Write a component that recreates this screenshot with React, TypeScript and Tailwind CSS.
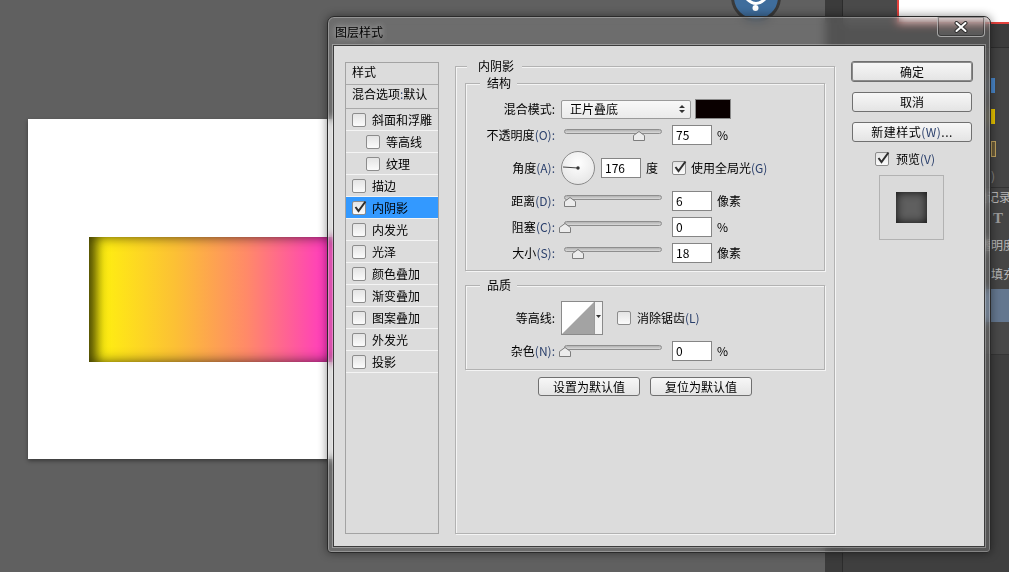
import React from "react";
import clsx from "clsx";

type StyleItem = { label: string; checked?: boolean; indent?: boolean; active?: boolean };

const styleItems: StyleItem[] = [
  { label: "斜面和浮雕" },
  { label: "等高线", indent: true },
  { label: "纹理", indent: true },
  { label: "描边" },
  { label: "内阴影", checked: true, active: true },
  { label: "内发光" },
  { label: "光泽" },
  { label: "颜色叠加" },
  { label: "渐变叠加" },
  { label: "图案叠加" },
  { label: "外发光" },
  { label: "投影" },
];

function Check({ checked = false }: { checked?: boolean }) {
  return (
    <span className="relative flex h-[14px] w-[14px] shrink-0 rounded-[2px] border border-[#8c8c8c] bg-gradient-to-b from-[#e4e4e4] to-[#fbfbfb]">
      {checked && (
        <svg width="15" height="15" viewBox="0 0 15 15" className="absolute -top-[3px] left-[0px]">
          <path d="M2.5 8 L5.5 12 L12.5 2.5" fill="none" stroke="#2e2e2e" strokeWidth="2" />
        </svg>
      )}
    </span>
  );
}

// hotkey part of a label, e.g. (O)
function Key({ c }: { c: string }) {
  return <span className="text-[#2a3f6b]">({c}):</span>;
}

function Slider({ pos }: { pos: number }) {
  // pos = centre of the thumb, px from the slider's left edge
  return (
    <div className="relative ml-[6px] h-[20px] w-[104px] shrink-0">
      <div className="absolute left-[3px] right-[3px] top-[4px] h-[5px] rounded-full border border-[#8e8e8e] bg-gradient-to-b from-[#b2b2b2] to-[#dadada]" />
      <svg className="absolute top-[6px]" style={{ left: pos - 6 }} width="12" height="10" viewBox="0 0 12 10">
        <path d="M0.5 9.5 V4.5 L6 0.5 L11.5 4.5 V9.5 Z" fill="#ececec" stroke="#7d7d7d" />
      </svg>
    </div>
  );
}

function Field({ value }: { value: string }) {
  return (
    <div className="h-[20px] w-[40px] shrink-0 border border-[#858585] bg-white pl-[3px] leading-[18px]">{value}</div>
  );
}

function Label({ children }: { children: React.ReactNode }) {
  return <span className="w-[89px] shrink-0 whitespace-nowrap text-right">{children}</span>;
}

function SliderRow({ label, k, pos, value, unit }: { label: string; k: string; pos: number; value: string; unit: string }) {
  return (
    <div className="flex h-[20px] items-center">
      <Label>
        {label}
        <Key c={k} />
      </Label>
      <Slider pos={pos} />
      <div className="ml-[7px]">
        <Field value={value} />
      </div>
      <span className="ml-[5px]">{unit}</span>
    </div>
  );
}

function Btn({ children, className }: { children: React.ReactNode; className?: string }) {
  return (
    <div
      className={clsx(
        "flex items-center justify-center rounded-[3px] border border-[#707070] bg-gradient-to-b from-[#f7f7f7] to-[#e4e4e4]",
        className
      )}
    >
      {children}
    </div>
  );
}

function Group({ title, children, className }: { title: string; children: React.ReactNode; className?: string }) {
  return (
    <fieldset
      className={clsx(
        "border border-[#b2b2b2] shadow-[inset_1px_1px_0_#f4f4f4,1px_1px_0_#f4f4f4]",
        className
      )}
    >
      <legend className="ml-[14px] bg-[#dcdcdc] pl-[7px] pr-[6px] leading-[16px]">{title}</legend>
      {children}
    </fieldset>
  );
}

function StyleList() {
  return (
    <div className="mt-[16px] flex h-[472px] w-[94px] shrink-0 flex-col border border-[#a3a3a3]">
      <div className="h-[22px] shrink-0 border-b border-[#a9a9a9] pl-[6px] pt-[1px]">样式</div>
      <div className="h-[24px] shrink-0 border-b border-[#a9a9a9] pl-[6px] pt-[1px] whitespace-nowrap">
        混合选项<span className="text-[#2a3f6b]">:</span>默认
      </div>
      {styleItems.map((it) => (
        <div
          key={it.label}
          className={clsx(
            "flex h-[22px] shrink-0 items-center gap-[6px] border-b border-[#f4f4f4]",
            it.indent ? "pl-[20px]" : "pl-[6px]",
            it.active && "bg-[#3399ff]"
          )}
        >
          <Check checked={it.checked} />
          <span>{it.label}</span>
        </div>
      ))}
    </div>
  );
}

function InnerShadowPanel() {
  return (
    <fieldset className="mt-[12px] h-[476px] w-[380px] shrink-0 border border-[#b2b2b2] shadow-[inset_1px_1px_0_#f4f4f4,1px_1px_0_#f4f4f4]">
      <legend className="ml-[11px] bg-[#dcdcdc] pl-[11px] pr-[8px] leading-[16px]">内阴影</legend>

      <Group title="结构" className="mx-[9px] mt-[1px] pb-[7px] pt-[8px]">
        <div className="flex flex-col gap-[6px]">
          <div className="flex h-[20px] items-center">
            <Label>混合模式:</Label>
            <div className="ml-[6px] flex h-[19px] w-[130px] items-center justify-between rounded-[2px] border border-[#9a9a9a] bg-gradient-to-b from-[#f8f8f8] to-[#ebebeb] pl-[8px] pr-[5px]">
              <span>正片叠底</span>
              <svg width="6" height="10" viewBox="0 0 6 10">
                <path d="M0 4 L3 1 L6 4Z M0 6 L3 9 L6 6Z" fill="#333" />
              </svg>
            </div>
            <div className="ml-[4px] h-[20px] w-[36px] border border-[#8a8a8a] bg-[#0a0000]" />
          </div>

          <SliderRow label="不透明度" k="O" pos={77.5} value="75" unit="%" />

          <div className="flex h-[34px] items-center">
            <Label>
              角度
              <Key c="A" />
            </Label>
            <div className="relative ml-[6px] h-[34px] w-[34px] shrink-0 rounded-full border border-[#8a8a8a] bg-[radial-gradient(circle_at_50%_35%,#ffffff,#e0e0e0)]">
              <svg className="absolute inset-0" width="32" height="32" viewBox="0 0 32 32">
                <line x1="16" y1="16" x2="1" y2="15" stroke="#444" strokeWidth="1" />
                <circle cx="16" cy="16" r="1.7" fill="#333" />
              </svg>
            </div>
            <div className="ml-[6px]">
              <Field value="176" />
            </div>
            <span className="ml-[5px]">度</span>
            <span className="ml-[14px]">
              <Check checked />
            </span>
            <span className="ml-[5px] whitespace-nowrap">
              使用全局光<span className="text-[#2a3f6b]">(G)</span>
            </span>
          </div>

          <SliderRow label="距离" k="D" pos={9} value="6" unit="像素" />
          <SliderRow label="阻塞" k="C" pos={3.5} value="0" unit="%" />
          <SliderRow label="大小" k="S" pos={16.5} value="18" unit="像素" />
        </div>
      </Group>

      <Group title="品质" className="mx-[9px] mt-[6px] pb-[8px] pt-[8px]">
        <div className="flex flex-col gap-[6px]">
          <div className="flex h-[34px] items-center">
            <Label>等高线:</Label>
            <div className="ml-[6px] flex h-[34px] w-[42px] shrink-0 border border-[#8a8a8a] bg-white">
              <svg width="32" height="32" viewBox="0 0 32 32" className="shrink-0">
                <path d="M0 32 L32 0 L32 32 Z" fill="#a3a3a3" />
              </svg>
              <div className="flex flex-1 justify-center border-l border-[#9a9a9a] bg-[#f3f3f3] pt-[13px]">
                <svg width="5" height="3" viewBox="0 0 5 3">
                  <path d="M0 0 H5 L2.5 3 Z" fill="#333" />
                </svg>
              </div>
            </div>
            <span className="ml-[14px]">
              <Check />
            </span>
            <span className="ml-[6px] whitespace-nowrap">
              消除锯齿<span className="text-[#2a3f6b]">(L)</span>
            </span>
          </div>
          <SliderRow label="杂色" k="N" pos={3.5} value="0" unit="%" />
        </div>
      </Group>

      <div className="mt-[7px] flex justify-center gap-[10px]">
        <Btn className="h-[19px] w-[102px]">设置为默认值</Btn>
        <Btn className="h-[19px] w-[102px]">复位为默认值</Btn>
      </div>
    </fieldset>
  );
}

function ActionColumn() {
  return (
    <div className="mt-[15px] flex w-[122px] shrink-0 flex-col items-start">
      <Btn className="h-[21px] w-[122px] border-[#5e5e5e] shadow-[inset_0_0_0_1px_#8a8a8a]">确定</Btn>
      <Btn className="ml-[1px] mt-[10px] h-[20px] w-[120px]">取消</Btn>
      <Btn className="ml-[1px] mt-[10px] h-[20px] w-[120px] tracking-[0.5px]">
        新建样式<span className="text-[#2a3f6b]">(W)</span>...
      </Btn>
      <div className="ml-[24px] mt-[10px] flex h-[14px] items-center gap-[7px]">
        <Check checked />
        <span>
          预览<span className="text-[#2a3f6b]">(V)</span>
        </span>
      </div>
      <div className="ml-[28px] mt-[9px] flex h-[65px] w-[65px] items-center justify-center border border-[#b2b2b2] bg-[#dadada]">
        <div className="h-[31px] w-[31px] bg-[#5f5f5f] shadow-[inset_0_0_10px_rgba(0,0,0,0.85)]" />
      </div>
    </div>
  );
}

function LayerStyleDialog() {
  return (
    <div className="absolute left-[327px] top-[16px] flex h-[537px] w-[664px] flex-col rounded-b-[4px] rounded-t-[7px] border border-[#2a2a2a] bg-[#8c8c8c]/30 px-[5px] pb-[5px] shadow-[inset_0_0_0_1px_rgba(255,255,255,0.28),0_0_10px_rgba(0,0,0,0.45)] backdrop-blur-[4px]">
      <div className="flex h-[28px] shrink-0 items-start justify-between">
        <span className="mt-[7px] pl-[2px] [text-shadow:0_0_6px_rgba(255,255,255,0.75)]">图层样式</span>
        <div className="flex h-[20px] w-[48px] items-center justify-center rounded-b-[4px] border border-t-0 border-[#b9b9b9]/80 bg-white/5 shadow-[inset_0_0_0_1px_rgba(0,0,0,0.35)]">
          <svg width="14" height="12" viewBox="0 0 14 12">
            <path d="M2.5 2 L11.5 10 M11.5 2 L2.5 10" stroke="#2f2f2f" strokeWidth="4" strokeLinecap="round" />
            <path d="M2.5 2 L11.5 10 M11.5 2 L2.5 10" stroke="#ffffff" strokeWidth="2" strokeLinecap="round" />
          </svg>
        </div>
      </div>
      <div className="flex flex-1 items-start gap-[16px] border border-[#3c3c3c] bg-[#dcdcdc] px-[11px] shadow-[0_0_0_1px_rgba(255,255,255,0.3)]">
        <StyleList />
        <InnerShadowPanel />
        <ActionColumn />
      </div>
    </div>
  );
}

function SidePanels() {
  return (
    <div className="flex w-[166px] shrink-0 flex-col bg-[#454545] text-[#b8b8b8]">
      <div className="flex h-[24px] shrink-0">
        <div className="w-[54px] bg-[#4a4a4a]" />
        <div className="flex-1 border-b-2 border-l-2 border-[#e5423d] bg-white" />
      </div>
      <div className="h-[24px] shrink-0 border-b border-[#2e2e2e] bg-[#3c3c3c]" />
      <div className="h-[22px] shrink-0 bg-[#424242]" />
      <div className="flex h-[30px] shrink-0 items-center pl-[147px]">
        <span className="h-[15px] w-[5px] bg-[#4a88cc]" />
      </div>
      <div className="flex h-[33px] shrink-0 items-center pl-[147px]">
        <span className="h-[15px] w-[5px] bg-[#e8c400]" />
      </div>
      <div className="flex h-[32px] shrink-0 items-center pl-[148px]">
        <span className="h-[16px] w-[5px] border border-[#c2a560] bg-[#6b5c3a]" />
      </div>
      <div className="flex h-[22px] shrink-0 items-center pl-[148px] text-[#8a8a8a]">)</div>
      <div className="flex h-[18px] shrink-0 items-center whitespace-nowrap border-t border-[#333] pl-[120px]">历史记录</div>
      <div className="flex h-[26px] shrink-0 items-center pl-[150px] font-['Liberation_Serif',serif] text-[15px] font-bold text-[#9a9a9a]">
        T
      </div>
      <div className="flex h-[28px] shrink-0 items-center whitespace-nowrap pl-[124px]">不透明度:</div>
      <div className="flex h-[30px] shrink-0 items-center whitespace-nowrap pl-[148px]">填充:</div>
      <div className="h-[33px] shrink-0 bg-[#64778f]" />
      <div className="h-[33px] shrink-0 border-b border-[#363636] bg-[#484848]" />
      <div className="flex-1 bg-[#3f3f3f]" />
    </div>
  );
}

export default function App() {
  return (
    <div className="relative flex h-[572px] w-[1009px] overflow-hidden font-['Noto_Sans_CJK_SC','Noto_Sans',sans-serif] text-[12px] leading-[16px] text-black">
      {/* workspace with the document */}
      <div className="relative w-[825px] shrink-0 bg-[#606060] pl-[28px] pt-[119px]">
        <div className="h-[340px] w-[560px] bg-white pl-[61px] pt-[118px] shadow-[0_2px_4px_rgba(0,0,0,0.4)]">
          <div className="h-[125px] w-[262px] bg-[linear-gradient(90deg,#fff70a_0%,#fcc035_33%,#ff8a68_60%,#ff3dbd_90%,#ff33c4_100%)] shadow-[inset_12px_0_12px_-4px_rgba(0,0,0,0.6),inset_0_0_14px_rgba(0,0,0,0.45)]" />
        </div>
        {/* floating round button, mostly off the top edge */}
        <div className="absolute left-[731px] top-[-28px] h-[50px] w-[50px] rounded-full border-[3px] border-[#3a3a3a] bg-[#3f6d9c]">
          <svg className="absolute inset-0" width="44" height="44" viewBox="0 0 44 44">
            <path d="M13 24 Q22 33 31 24" fill="none" stroke="#fff" strokeWidth="3" />
            <circle cx="21.5" cy="33" r="3" fill="#fff" />
          </svg>
        </div>
      </div>
      {/* panel dock */}
      <div className="w-[18px] shrink-0 border-r border-[#2c2c2c] bg-[#3b3b3b]" />
      <SidePanels />

      <LayerStyleDialog />
    </div>
  );
}
